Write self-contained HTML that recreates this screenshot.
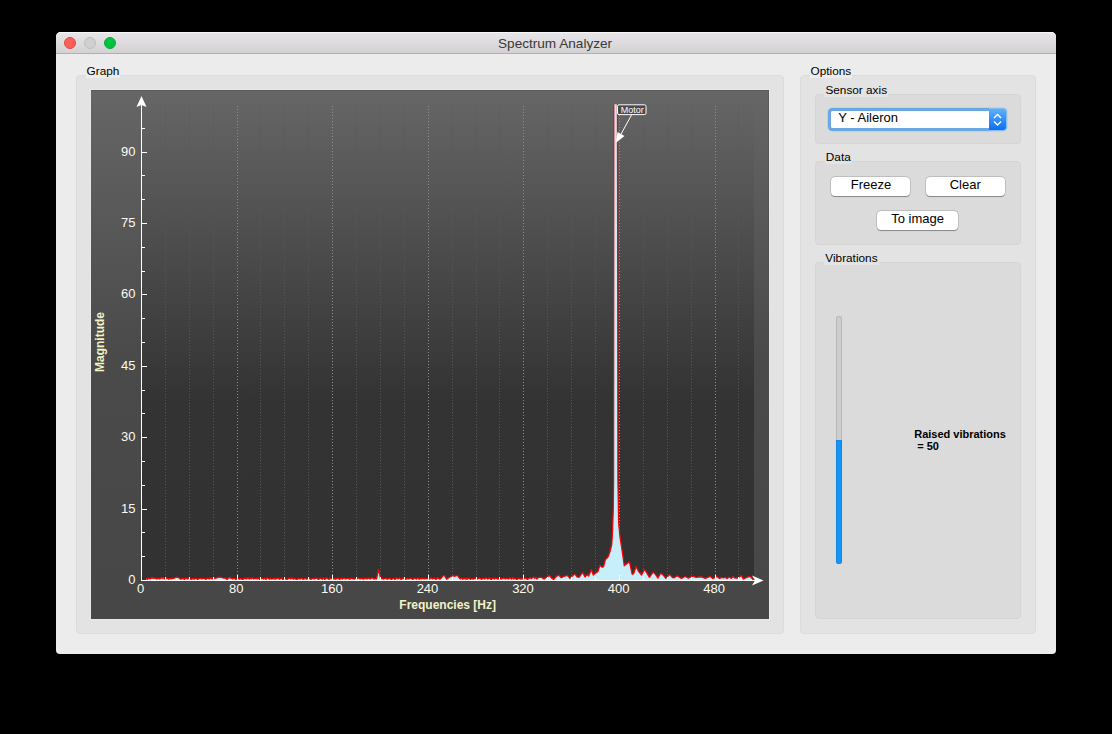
<!DOCTYPE html>
<html><head><meta charset="utf-8"><style>
html,body{margin:0;padding:0;background:#000;width:1112px;height:734px;overflow:hidden;font-family:"Liberation Sans",sans-serif;}
.a{position:absolute;box-sizing:border-box;}
.t{position:absolute;white-space:pre;line-height:1;font-family:"Liberation Sans",sans-serif;}
.plot{position:absolute;left:0;top:0;}
.lbl{background:#ececec;padding:0 1px;margin-left:-1px;}
.lbl2{background:#e3e3e3;padding:0 1px;margin-left:-1px;}
</style></head><body>
<div class="a" style="left:56px;top:32px;width:1000px;height:622px;background:#ececec;border-radius:5px 5px 4px 4px;"></div>
<div class="a" style="left:56px;top:32px;width:1000px;height:22px;background:linear-gradient(#e8e6e8,#d3d1d3);border-radius:5px 5px 0 0;border-bottom:1px solid #b2b0b2;box-shadow:inset 0 1px 0 #f7f7f7;"></div>
<div class="a" style="left:64px;top:37px;width:12px;height:12px;border-radius:50%;background:#fc5f57;border:0.5px solid #df4a44;"></div>
<div class="a" style="left:84px;top:37px;width:12px;height:12px;border-radius:50%;background:#d0d0d0;border:0.5px solid #bdbdbd;"></div>
<div class="a" style="left:104px;top:37px;width:12px;height:12px;border-radius:50%;background:#00c440;border:0.5px solid #0fa63c;"></div>
<div class="t" style="left:498px;top:36.59px;font-size:13.6px;font-weight:400;color:#383838;">Spectrum Analyzer</div>

<div class="a" style="left:76px;top:75px;width:708px;height:559px;background:#e3e3e3;border:1px solid #dcdcdc;border-radius:4px;"></div>
<div class="t" style="left:86.6px;top:66.01px;font-size:11.8px;font-weight:400;color:#000;"><span class="lbl">Graph</span></div>
<div class="a" style="left:800px;top:75px;width:236px;height:559px;background:#e3e3e3;border:1px solid #dcdcdc;border-radius:4px;"></div>
<div class="t" style="left:810.5px;top:65.61px;font-size:11.8px;font-weight:400;color:#000;"><span class="lbl">Options</span></div>

<div class="a" style="left:815px;top:94px;width:206px;height:50px;background:#dbdbdb;border:1px solid #d5d5d5;border-radius:4px;"></div>
<div class="t" style="left:825.4px;top:84.81px;font-size:11.8px;font-weight:400;color:#000;"><span class="lbl2">Sensor axis</span></div>
<div class="a" style="left:828.3px;top:108px;width:179px;height:22.6px;border-radius:4.5px;background:#6aa8e3;box-shadow:0 0 0 0.6px rgba(140,190,240,0.6);"></div>
<div class="a" style="left:989px;top:108px;width:18.3px;height:22.6px;border-radius:0 4.5px 4.5px 0;background:#86bdf0;"></div>
<div class="a" style="left:831px;top:110.7px;width:158px;height:17.2px;background:#fff;border-radius:1.5px 0 0 1.5px;"></div>
<div class="a" style="left:989px;top:109.3px;width:17px;height:20.4px;background:linear-gradient(#5fb0f8,#0b6ef5);border-radius:0 3.5px 3.5px 0;"></div>
<svg class="a" style="left:989px;top:109.5px" width="17" height="21" viewBox="0 0 17 21"><path d="M5,8 L8.5,4.5 L12,8 M5,11.5 L8.5,15 L12,11.5" fill="none" stroke="#fff" stroke-width="1.4"/></svg>
<div class="t" style="left:838.2px;top:111.00px;font-size:13px;font-weight:400;color:#000;">Y - Aileron</div>

<div class="a" style="left:815px;top:161px;width:206px;height:84px;background:#dbdbdb;border:1px solid #d5d5d5;border-radius:4px;"></div>
<div class="t" style="left:825.8px;top:152.31px;font-size:11.8px;font-weight:400;color:#000;"><span class="lbl2">Data</span></div>
<div class="a" style="left:830.5px;top:176.5px;width:79.3px;height:19.4px;background:#fff;border-radius:4px;box-shadow:0 0 0 0.5px rgba(0,0,0,0.22),0 0.6px 0.8px rgba(0,0,0,0.3);"></div>
<div class="t" style="left:850.8px;top:177.90px;font-size:13px;font-weight:400;color:#000;">Freeze</div>
<div class="a" style="left:925.5px;top:176.5px;width:79.3px;height:19.4px;background:#fff;border-radius:4px;box-shadow:0 0 0 0.5px rgba(0,0,0,0.22),0 0.6px 0.8px rgba(0,0,0,0.3);"></div>
<div class="t" style="left:949.7px;top:177.80px;font-size:13px;font-weight:400;color:#000;">Clear</div>
<div class="a" style="left:876.5px;top:210.5px;width:81.3px;height:19.4px;background:#fff;border-radius:4px;box-shadow:0 0 0 0.5px rgba(0,0,0,0.22),0 0.6px 0.8px rgba(0,0,0,0.3);"></div>
<div class="t" style="left:891.2px;top:212.00px;font-size:13px;font-weight:400;color:#000;">To image</div>

<div class="a" style="left:815px;top:262px;width:206px;height:357px;background:#dbdbdb;border:1px solid #d5d5d5;border-radius:4px;"></div>
<div class="t" style="left:825.3px;top:252.61px;font-size:11.8px;font-weight:400;color:#000;"><span class="lbl2">Vibrations</span></div>
<div class="a" style="left:836px;top:316px;width:6px;height:248px;background:#cecece;border-radius:3px;overflow:hidden;box-shadow:inset 0 0 0 1px #b8b8b8;"><div class="a" style="left:0;top:124px;width:6px;height:124px;background:#1594f6;box-shadow:inset 0 0 0 0.8px #0b86ea;"></div></div>
<div class="t" style="left:914.2px;top:429.49px;font-size:11px;font-weight:700;color:#000;">Raised vibrations</div>
<div class="t" style="left:914.2px;top:440.59px;font-size:11px;font-weight:700;color:#000;"> = 50</div>

<div class="a" style="left:90px;top:89px;width:680px;height:531px;border-top:1px solid #e9e9e9;border-left:1px solid #e7e7e7;border-right:1px solid #e9e9e9;border-bottom:1px solid #e9e9e9;"></div>
<svg class="plot" width="1112" height="734" viewBox="0 0 1112 734">
<defs>
 <linearGradient id="gm" x1="0" y1="90" x2="0" y2="619" gradientUnits="userSpaceOnUse">
  <stop offset="0" stop-color="#666666"/><stop offset="0.5" stop-color="#4a4a4a"/><stop offset="1" stop-color="#474747"/>
 </linearGradient>
 <linearGradient id="gc" x1="0" y1="104" x2="0" y2="580" gradientUnits="userSpaceOnUse">
  <stop offset="0" stop-color="#646464"/><stop offset="0.62" stop-color="#333333"/><stop offset="1" stop-color="#323232"/>
 </linearGradient>
 <clipPath id="cc"><rect x="142" y="104.3" width="612" height="476.2"/></clipPath>
</defs>
<rect x="91" y="90" width="678" height="529" fill="url(#gm)"/>
<rect x="91" y="90" width="678" height="1" fill="#5a5a5a"/><rect x="768" y="90" width="1" height="529" fill="#4a4a4a" opacity="0.4"/>
<rect x="142" y="104" width="612" height="476" fill="url(#gc)"/>
<line x1="165.5" y1="106" x2="165.5" y2="580" stroke="#575757" stroke-width="1" stroke-dasharray="1 2"/>
<line x1="189.5" y1="106" x2="189.5" y2="580" stroke="#575757" stroke-width="1" stroke-dasharray="1 2"/>
<line x1="213.5" y1="106" x2="213.5" y2="580" stroke="#575757" stroke-width="1" stroke-dasharray="1 2"/>
<line x1="237.5" y1="106" x2="237.5" y2="580" stroke="#8c8c8c" stroke-width="1" stroke-dasharray="1 2"/>
<line x1="260.5" y1="106" x2="260.5" y2="580" stroke="#575757" stroke-width="1" stroke-dasharray="1 2"/>
<line x1="284.5" y1="106" x2="284.5" y2="580" stroke="#575757" stroke-width="1" stroke-dasharray="1 2"/>
<line x1="308.5" y1="106" x2="308.5" y2="580" stroke="#575757" stroke-width="1" stroke-dasharray="1 2"/>
<line x1="332.5" y1="106" x2="332.5" y2="580" stroke="#8c8c8c" stroke-width="1" stroke-dasharray="1 2"/>
<line x1="356.5" y1="106" x2="356.5" y2="580" stroke="#575757" stroke-width="1" stroke-dasharray="1 2"/>
<line x1="380.5" y1="106" x2="380.5" y2="580" stroke="#575757" stroke-width="1" stroke-dasharray="1 2"/>
<line x1="404.5" y1="106" x2="404.5" y2="580" stroke="#575757" stroke-width="1" stroke-dasharray="1 2"/>
<line x1="428.5" y1="106" x2="428.5" y2="580" stroke="#8c8c8c" stroke-width="1" stroke-dasharray="1 2"/>
<line x1="452.5" y1="106" x2="452.5" y2="580" stroke="#575757" stroke-width="1" stroke-dasharray="1 2"/>
<line x1="476.5" y1="106" x2="476.5" y2="580" stroke="#575757" stroke-width="1" stroke-dasharray="1 2"/>
<line x1="499.5" y1="106" x2="499.5" y2="580" stroke="#575757" stroke-width="1" stroke-dasharray="1 2"/>
<line x1="523.5" y1="106" x2="523.5" y2="580" stroke="#8c8c8c" stroke-width="1" stroke-dasharray="1 2"/>
<line x1="547.5" y1="106" x2="547.5" y2="580" stroke="#575757" stroke-width="1" stroke-dasharray="1 2"/>
<line x1="571.5" y1="106" x2="571.5" y2="580" stroke="#575757" stroke-width="1" stroke-dasharray="1 2"/>
<line x1="595.5" y1="106" x2="595.5" y2="580" stroke="#575757" stroke-width="1" stroke-dasharray="1 2"/>
<line x1="619.5" y1="106" x2="619.5" y2="580" stroke="#8c8c8c" stroke-width="1" stroke-dasharray="1 2"/>
<line x1="643.5" y1="106" x2="643.5" y2="580" stroke="#575757" stroke-width="1" stroke-dasharray="1 2"/>
<line x1="667.5" y1="106" x2="667.5" y2="580" stroke="#575757" stroke-width="1" stroke-dasharray="1 2"/>
<line x1="691.5" y1="106" x2="691.5" y2="580" stroke="#575757" stroke-width="1" stroke-dasharray="1 2"/>
<line x1="715.5" y1="106" x2="715.5" y2="580" stroke="#8c8c8c" stroke-width="1" stroke-dasharray="1 2"/>
<line x1="738.5" y1="106" x2="738.5" y2="580" stroke="#575757" stroke-width="1" stroke-dasharray="1 2"/>
<g clip-path="url(#cc)">
<path d="M146.5,578.0 L147.6,579.3 L148.6,578.2 L150.1,578.9 L151.7,577.7 L153.3,578.3 L154.3,578.0 L156.5,579.0 L157.7,578.3 L160.0,578.8 L161.5,577.7 L162.5,578.3 L163.8,577.8 L164.9,579.1 L167.0,577.9 L168.8,579.3 L170.3,578.2 L171.3,578.9 L172.5,578.4 L174.0,578.3 L175.8,577.5 L177.1,577.2 L179.1,577.9 L180.8,579.2 L183.1,578.4 L184.4,579.5 L185.5,578.1 L187.5,579.0 L189.1,577.7 L191.0,579.4 L192.8,578.6 L194.2,579.3 L196.0,578.3 L197.5,579.4 L199.9,578.2 L201.8,578.9 L203.7,578.3 L206.1,579.4 L207.4,578.1 L209.3,578.9 L210.9,577.9 L212.0,578.9 L214.0,577.8 L215.3,578.4 L217.5,577.7 L219.1,577.1 L221.3,577.4 L223.5,578.1 L225.0,578.1 L227.3,579.5 L228.4,577.9 L229.6,577.7 L231.3,578.3 L232.6,578.9 L234.1,578.1 L235.8,579.5 L237.8,578.2 L239.6,579.3 L240.6,578.6 L242.7,579.4 L244.8,578.1 L246.3,579.0 L248.1,577.8 L249.1,579.0 L250.2,578.0 L251.2,578.9 L252.4,577.8 L253.8,578.9 L256.0,578.3 L257.1,579.1 L258.6,578.1 L259.6,579.4 L262.0,578.2 L263.7,579.0 L264.7,578.0 L266.0,579.4 L267.1,577.7 L269.5,579.2 L270.6,578.2 L271.5,579.2 L273.9,578.6 L275.8,579.1 L277.3,577.9 L279.4,579.2 L281.4,578.0 L282.7,579.4 L285.0,578.6 L287.1,579.4 L289.2,577.9 L290.8,579.1 L291.8,577.7 L293.1,579.1 L295.0,578.7 L296.6,579.5 L299.0,578.7 L300.4,579.0 L301.7,577.9 L302.9,579.3 L305.1,578.5 L306.7,579.3 L308.8,577.8 L310.7,579.4 L312.8,578.5 L314.4,579.0 L316.5,578.0 L318.6,579.5 L320.1,578.1 L322.4,579.3 L323.6,577.8 L324.7,579.4 L326.8,577.8 L329.0,579.5 L330.8,578.1 L332.6,579.0 L333.5,578.7 L335.4,579.2 L337.7,578.1 L339.9,579.4 L341.1,578.0 L342.4,579.0 L344.2,578.0 L345.7,579.0 L348.0,578.1 L349.6,579.3 L351.8,578.1 L354.1,579.2 L355.8,578.2 L356.7,579.2 L357.9,577.7 L360.0,579.0 L361.6,578.4 L363.4,579.1 L365.0,578.3 L367.1,579.0 L368.9,577.9 L370.2,579.0 L371.8,577.7 L373.9,579.0 L376.6,578.8 L378.5,569.3 L380.6,578.8 L381.8,578.3 L383.5,579.2 L385.4,578.2 L387.1,579.2 L389.4,578.4 L391.6,579.5 L392.9,578.3 L395.2,579.4 L396.3,577.8 L397.9,578.9 L399.2,577.8 L401.1,579.4 L403.3,577.9 L405.3,579.3 L406.4,578.6 L408.7,579.0 L411.1,578.1 L412.7,579.5 L414.9,577.9 L416.4,579.2 L417.8,577.9 L419.2,579.3 L420.1,578.3 L421.7,578.9 L423.1,578.3 L424.7,578.9 L427.1,578.5 L429.5,579.0 L430.8,577.7 L432.8,579.1 L433.9,578.1 L436.2,579.4 L437.5,577.8 L439.8,579.2 L441.7,577.8 L442.7,576.1 L444.3,575.3 L446.6,579.3 L448.7,577.8 L450.8,576.8 L453.0,575.5 L454.4,576.4 L456.7,575.4 L457.8,575.8 L459.1,577.8 L460.2,578.9 L461.4,578.0 L462.8,579.4 L464.1,578.2 L465.3,579.1 L466.2,578.0 L467.1,579.3 L468.9,577.9 L470.5,579.5 L471.5,578.5 L473.1,579.2 L475.2,578.1 L476.9,579.3 L479.3,578.0 L481.4,579.3 L483.3,578.1 L484.7,578.9 L485.8,577.8 L487.8,579.1 L489.0,577.8 L491.1,579.4 L493.0,578.0 L494.3,579.1 L495.9,577.9 L497.4,579.1 L499.8,578.7 L501.5,579.0 L503.9,578.0 L505.3,578.9 L506.8,578.2 L508.4,579.0 L510.1,577.7 L511.4,579.0 L512.9,577.7 L513.8,579.1 L515.0,578.3 L516.7,579.4 L518.6,578.4 L520.8,579.1 L522.2,578.7 L523.4,579.3 L525.2,577.7 L527.4,579.4 L530.0,577.8 L531.6,578.6 L533.5,577.0 L534.9,578.3 L535.7,577.3 L537.0,579.1 L538.6,577.3 L541.3,577.3 L544.0,579.1 L546.2,577.5 L549.2,575.4 L551.6,578.1 L553.7,579.4 L556.4,576.4 L558.6,575.1 L561.3,577.8 L564.0,576.4 L567.2,575.4 L569.9,578.3 L572.1,576.2 L574.8,574.0 L577.0,577.0 L579.1,577.3 L582.6,572.4 L585.0,577.0 L587.2,574.6 L588.6,576.2 L591.4,569.4 L593.2,575.1 L595.7,573.0 L597.9,571.6 L600.0,565.4 L602.2,567.3 L603.6,566.6 L605.5,559.4 L607.2,558.0 L608.6,555.8 L610.0,551.5 L611.8,544.4 L612.6,530.0 L613.3,508.6 L613.6,480.0 L613.7,300.0 L613.8,90.0 L617.4,90.0 L617.7,300.0 L617.9,480.0 L618.6,522.9 L620.0,537.2 L622.2,551.5 L624.3,565.8 L625.8,564.4 L629.4,561.8 L632.2,574.4 L633.6,573.7 L636.1,566.6 L638.7,571.6 L641.5,575.1 L644.4,569.4 L647.2,573.7 L649.4,577.3 L653.0,572.3 L655.0,573.8 L658.0,578.1 L660.4,573.5 L662.6,574.3 L665.8,578.4 L669.6,574.6 L672.3,577.3 L673.9,577.9 L677.1,575.7 L681.4,578.4 L685.2,576.5 L688.5,578.1 L692.2,576.2 L696.0,577.3 L701.4,576.8 L705.2,578.4 L710.3,576.5 L712.7,578.4 L714.4,578.0 L716.4,576.2 L719.5,578.4 L721.9,577.4 L723.9,578.0 L725.1,577.2 L727.0,578.6 L729.4,577.0 L731.4,578.4 L733.0,576.6 L734.6,578.0 L737.7,578.2 L741.3,575.4 L743.3,579.0 L745.6,578.0 L748.8,576.6 L750.8,577.0 L752.8,579.4 L756.0,579.4 L756.0,580.5 L146.5,580.5 Z" fill="#c6eefb"/>
<path d="M146.5,578.0 L147.6,579.3 L148.6,578.2 L150.1,578.9 L151.7,577.7 L153.3,578.3 L154.3,578.0 L156.5,579.0 L157.7,578.3 L160.0,578.8 L161.5,577.7 L162.5,578.3 L163.8,577.8 L164.9,579.1 L167.0,577.9 L168.8,579.3 L170.3,578.2 L171.3,578.9 L172.5,578.4 L174.0,578.3 L175.8,577.5 L177.1,577.2 L179.1,577.9 L180.8,579.2 L183.1,578.4 L184.4,579.5 L185.5,578.1 L187.5,579.0 L189.1,577.7 L191.0,579.4 L192.8,578.6 L194.2,579.3 L196.0,578.3 L197.5,579.4 L199.9,578.2 L201.8,578.9 L203.7,578.3 L206.1,579.4 L207.4,578.1 L209.3,578.9 L210.9,577.9 L212.0,578.9 L214.0,577.8 L215.3,578.4 L217.5,577.7 L219.1,577.1 L221.3,577.4 L223.5,578.1 L225.0,578.1 L227.3,579.5 L228.4,577.9 L229.6,577.7 L231.3,578.3 L232.6,578.9 L234.1,578.1 L235.8,579.5 L237.8,578.2 L239.6,579.3 L240.6,578.6 L242.7,579.4 L244.8,578.1 L246.3,579.0 L248.1,577.8 L249.1,579.0 L250.2,578.0 L251.2,578.9 L252.4,577.8 L253.8,578.9 L256.0,578.3 L257.1,579.1 L258.6,578.1 L259.6,579.4 L262.0,578.2 L263.7,579.0 L264.7,578.0 L266.0,579.4 L267.1,577.7 L269.5,579.2 L270.6,578.2 L271.5,579.2 L273.9,578.6 L275.8,579.1 L277.3,577.9 L279.4,579.2 L281.4,578.0 L282.7,579.4 L285.0,578.6 L287.1,579.4 L289.2,577.9 L290.8,579.1 L291.8,577.7 L293.1,579.1 L295.0,578.7 L296.6,579.5 L299.0,578.7 L300.4,579.0 L301.7,577.9 L302.9,579.3 L305.1,578.5 L306.7,579.3 L308.8,577.8 L310.7,579.4 L312.8,578.5 L314.4,579.0 L316.5,578.0 L318.6,579.5 L320.1,578.1 L322.4,579.3 L323.6,577.8 L324.7,579.4 L326.8,577.8 L329.0,579.5 L330.8,578.1 L332.6,579.0 L333.5,578.7 L335.4,579.2 L337.7,578.1 L339.9,579.4 L341.1,578.0 L342.4,579.0 L344.2,578.0 L345.7,579.0 L348.0,578.1 L349.6,579.3 L351.8,578.1 L354.1,579.2 L355.8,578.2 L356.7,579.2 L357.9,577.7 L360.0,579.0 L361.6,578.4 L363.4,579.1 L365.0,578.3 L367.1,579.0 L368.9,577.9 L370.2,579.0 L371.8,577.7 L373.9,579.0 L376.6,578.8 L378.5,569.3 L380.6,578.8 L381.8,578.3 L383.5,579.2 L385.4,578.2 L387.1,579.2 L389.4,578.4 L391.6,579.5 L392.9,578.3 L395.2,579.4 L396.3,577.8 L397.9,578.9 L399.2,577.8 L401.1,579.4 L403.3,577.9 L405.3,579.3 L406.4,578.6 L408.7,579.0 L411.1,578.1 L412.7,579.5 L414.9,577.9 L416.4,579.2 L417.8,577.9 L419.2,579.3 L420.1,578.3 L421.7,578.9 L423.1,578.3 L424.7,578.9 L427.1,578.5 L429.5,579.0 L430.8,577.7 L432.8,579.1 L433.9,578.1 L436.2,579.4 L437.5,577.8 L439.8,579.2 L441.7,577.8 L442.7,576.1 L444.3,575.3 L446.6,579.3 L448.7,577.8 L450.8,576.8 L453.0,575.5 L454.4,576.4 L456.7,575.4 L457.8,575.8 L459.1,577.8 L460.2,578.9 L461.4,578.0 L462.8,579.4 L464.1,578.2 L465.3,579.1 L466.2,578.0 L467.1,579.3 L468.9,577.9 L470.5,579.5 L471.5,578.5 L473.1,579.2 L475.2,578.1 L476.9,579.3 L479.3,578.0 L481.4,579.3 L483.3,578.1 L484.7,578.9 L485.8,577.8 L487.8,579.1 L489.0,577.8 L491.1,579.4 L493.0,578.0 L494.3,579.1 L495.9,577.9 L497.4,579.1 L499.8,578.7 L501.5,579.0 L503.9,578.0 L505.3,578.9 L506.8,578.2 L508.4,579.0 L510.1,577.7 L511.4,579.0 L512.9,577.7 L513.8,579.1 L515.0,578.3 L516.7,579.4 L518.6,578.4 L520.8,579.1 L522.2,578.7 L523.4,579.3 L525.2,577.7 L527.4,579.4 L530.0,577.8 L531.6,578.6 L533.5,577.0 L534.9,578.3 L535.7,577.3 L537.0,579.1 L538.6,577.3 L541.3,577.3 L544.0,579.1 L546.2,577.5 L549.2,575.4 L551.6,578.1 L553.7,579.4 L556.4,576.4 L558.6,575.1 L561.3,577.8 L564.0,576.4 L567.2,575.4 L569.9,578.3 L572.1,576.2 L574.8,574.0 L577.0,577.0 L579.1,577.3 L582.6,572.4 L585.0,577.0 L587.2,574.6 L588.6,576.2 L591.4,569.4 L593.2,575.1 L595.7,573.0 L597.9,571.6 L600.0,565.4 L602.2,567.3 L603.6,566.6 L605.5,559.4 L607.2,558.0 L608.6,555.8 L610.0,551.5 L611.8,544.4 L612.6,530.0 L613.3,508.6 L613.6,480.0 L613.7,300.0 L613.8,90.0 L617.4,90.0 L617.7,300.0 L617.9,480.0 L618.6,522.9 L620.0,537.2 L622.2,551.5 L624.3,565.8 L625.8,564.4 L629.4,561.8 L632.2,574.4 L633.6,573.7 L636.1,566.6 L638.7,571.6 L641.5,575.1 L644.4,569.4 L647.2,573.7 L649.4,577.3 L653.0,572.3 L655.0,573.8 L658.0,578.1 L660.4,573.5 L662.6,574.3 L665.8,578.4 L669.6,574.6 L672.3,577.3 L673.9,577.9 L677.1,575.7 L681.4,578.4 L685.2,576.5 L688.5,578.1 L692.2,576.2 L696.0,577.3 L701.4,576.8 L705.2,578.4 L710.3,576.5 L712.7,578.4 L714.4,578.0 L716.4,576.2 L719.5,578.4 L721.9,577.4 L723.9,578.0 L725.1,577.2 L727.0,578.6 L729.4,577.0 L731.4,578.4 L733.0,576.6 L734.6,578.0 L737.7,578.2 L741.3,575.4 L743.3,579.0 L745.6,578.0 L748.8,576.6 L750.8,577.0 L752.8,579.4 L756.0,579.4" fill="none" stroke="#ff0000" stroke-width="1.25" stroke-linejoin="round"/>
</g>
<g stroke-linecap="butt">
<rect x="141" y="104" width="1" height="477" fill="#fff"/>
<rect x="141" y="580" width="614" height="1" fill="#fff"/>
<line x1="142" y1="556.5" x2="145" y2="556.5" stroke="#fff" stroke-width="1"/>
<line x1="142" y1="532.5" x2="145" y2="532.5" stroke="#fff" stroke-width="1"/>
<line x1="142" y1="509.5" x2="147" y2="509.5" stroke="#fff" stroke-width="1"/>
<line x1="142" y1="485.5" x2="145" y2="485.5" stroke="#fff" stroke-width="1"/>
<line x1="142" y1="461.5" x2="145" y2="461.5" stroke="#fff" stroke-width="1"/>
<line x1="142" y1="437.5" x2="147" y2="437.5" stroke="#fff" stroke-width="1"/>
<line x1="142" y1="413.5" x2="145" y2="413.5" stroke="#fff" stroke-width="1"/>
<line x1="142" y1="390.5" x2="145" y2="390.5" stroke="#fff" stroke-width="1"/>
<line x1="142" y1="366.5" x2="147" y2="366.5" stroke="#fff" stroke-width="1"/>
<line x1="142" y1="342.5" x2="145" y2="342.5" stroke="#fff" stroke-width="1"/>
<line x1="142" y1="318.5" x2="145" y2="318.5" stroke="#fff" stroke-width="1"/>
<line x1="142" y1="294.5" x2="147" y2="294.5" stroke="#fff" stroke-width="1"/>
<line x1="142" y1="271.5" x2="145" y2="271.5" stroke="#fff" stroke-width="1"/>
<line x1="142" y1="247.5" x2="145" y2="247.5" stroke="#fff" stroke-width="1"/>
<line x1="142" y1="223.5" x2="147" y2="223.5" stroke="#fff" stroke-width="1"/>
<line x1="142" y1="199.5" x2="145" y2="199.5" stroke="#fff" stroke-width="1"/>
<line x1="142" y1="175.5" x2="145" y2="175.5" stroke="#fff" stroke-width="1"/>
<line x1="142" y1="152.5" x2="147" y2="152.5" stroke="#fff" stroke-width="1"/>
<line x1="142" y1="128.5" x2="145" y2="128.5" stroke="#fff" stroke-width="1"/>
<line x1="165.5" y1="580" x2="165.5" y2="577" stroke="#fff" stroke-width="1"/>
<line x1="189.5" y1="580" x2="189.5" y2="577" stroke="#fff" stroke-width="1"/>
<line x1="213.5" y1="580" x2="213.5" y2="577" stroke="#fff" stroke-width="1"/>
<line x1="237.5" y1="580" x2="237.5" y2="575" stroke="#fff" stroke-width="1"/>
<line x1="260.5" y1="580" x2="260.5" y2="577" stroke="#fff" stroke-width="1"/>
<line x1="284.5" y1="580" x2="284.5" y2="577" stroke="#fff" stroke-width="1"/>
<line x1="308.5" y1="580" x2="308.5" y2="577" stroke="#fff" stroke-width="1"/>
<line x1="332.5" y1="580" x2="332.5" y2="575" stroke="#fff" stroke-width="1"/>
<line x1="356.5" y1="580" x2="356.5" y2="577" stroke="#fff" stroke-width="1"/>
<line x1="380.5" y1="580" x2="380.5" y2="577" stroke="#fff" stroke-width="1"/>
<line x1="404.5" y1="580" x2="404.5" y2="577" stroke="#fff" stroke-width="1"/>
<line x1="428.5" y1="580" x2="428.5" y2="575" stroke="#fff" stroke-width="1"/>
<line x1="452.5" y1="580" x2="452.5" y2="577" stroke="#fff" stroke-width="1"/>
<line x1="476.5" y1="580" x2="476.5" y2="577" stroke="#fff" stroke-width="1"/>
<line x1="499.5" y1="580" x2="499.5" y2="577" stroke="#fff" stroke-width="1"/>
<line x1="523.5" y1="580" x2="523.5" y2="575" stroke="#fff" stroke-width="1"/>
<line x1="547.5" y1="580" x2="547.5" y2="577" stroke="#fff" stroke-width="1"/>
<line x1="571.5" y1="580" x2="571.5" y2="577" stroke="#fff" stroke-width="1"/>
<line x1="595.5" y1="580" x2="595.5" y2="577" stroke="#fff" stroke-width="1"/>
<line x1="619.5" y1="580" x2="619.5" y2="575" stroke="#fff" stroke-width="1"/>
<line x1="643.5" y1="580" x2="643.5" y2="577" stroke="#fff" stroke-width="1"/>
<line x1="667.5" y1="580" x2="667.5" y2="577" stroke="#fff" stroke-width="1"/>
<line x1="691.5" y1="580" x2="691.5" y2="577" stroke="#fff" stroke-width="1"/>
<line x1="715.5" y1="580" x2="715.5" y2="575" stroke="#fff" stroke-width="1"/>
<line x1="738.5" y1="580" x2="738.5" y2="577" stroke="#fff" stroke-width="1"/>
</g>
<path d="M141.5,96 L146.5,107 L141.5,105 L136.5,107 Z" fill="#fff"/>
<path d="M763.5,580.5 L752,575.5 L755,580.5 L752,585.5 Z" fill="#fff"/>
<g font-family="Liberation Sans" font-size="13" fill="#fbfbf2">
<text x="135.5" y="583.9" text-anchor="end">0</text>
<text x="135.5" y="512.5" text-anchor="end">15</text>
<text x="135.5" y="441.1" text-anchor="end">30</text>
<text x="135.5" y="369.7" text-anchor="end">45</text>
<text x="135.5" y="298.3" text-anchor="end">60</text>
<text x="135.5" y="226.9" text-anchor="end">75</text>
<text x="135.5" y="155.5" text-anchor="end">90</text>
<text x="140.7" y="593" text-anchor="middle">0</text>
<text x="236.3" y="593" text-anchor="middle">80</text>
<text x="331.9" y="593" text-anchor="middle">160</text>
<text x="427.5" y="593" text-anchor="middle">240</text>
<text x="523.0" y="593" text-anchor="middle">320</text>
<text x="618.6" y="593" text-anchor="middle">400</text>
<text x="714.2" y="593" text-anchor="middle">480</text>
</g>
<text x="0" y="0" transform="translate(104,342) rotate(-90)" text-anchor="middle" font-family="Liberation Sans" font-size="12" font-weight="700" fill="#f3f3c4">Magnitude</text>
<text x="447.7" y="609" text-anchor="middle" font-family="Liberation Sans" font-size="12" font-weight="700" fill="#f3f3c4">Frequencies [Hz]</text>
<rect x="617.5" y="104.8" width="28.5" height="9.8" rx="1.5" fill="#4a4a4a" stroke="#fff" stroke-width="1"/>
<text x="620.8" y="112.6" font-family="Liberation Sans" font-size="9" fill="#fff">Motor</text>
<line x1="631.5" y1="115" x2="620" y2="136" stroke="#fff" stroke-width="1"/>
<path d="M616,142.8 L617.5,132 L624.5,136 Z" fill="#fff"/>
</svg>
</body></html>
